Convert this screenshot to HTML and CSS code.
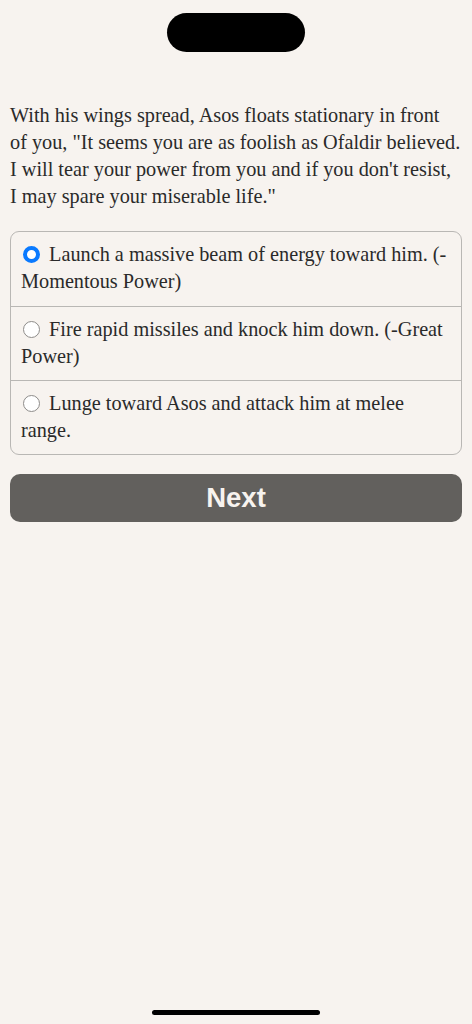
FILE: index.html
```html
<!DOCTYPE html>
<html lang="en">
<head>
  <meta charset="UTF-8" />
  <meta name="viewport" content="width=device-width, initial-scale=1.0"/>
  <title>Asos</title>
  <link rel="stylesheet" href="styles.css">
</head>
<body>
  <div class="screen">
    <div class="island"></div>

    <p class="story">With his wings spread, Asos floats stationary in front<br>
      of you, "It seems you are as foolish as Ofaldir believed.<br>
      I will tear your power from you and if you don't resist,<br>
      I may spare your miserable life."</p>

    <form class="choices">
      <label class="choice">
        <input type="radio" name="choice" checked>
        Launch a massive beam of energy toward him. (-Momentous Power)
      </label>
      <label class="choice">
        <input type="radio" name="choice">
        Fire rapid missiles and knock him down. (-Great Power)
      </label>
      <label class="choice">
        <input type="radio" name="choice">
        Lunge toward Asos and attack him at melee range.
      </label>
    </form>

    <button type="button" class="next-button">Next</button>

    <div class="home-bar"></div>
  </div>
</body>
</html>
```

FILE: styles.css
```css
* {
  margin: 0;
  padding: 0;
  box-sizing: border-box;
}

body {
  background-color: #f7f3ef;
  font-family: 'Liberation Serif', 'Times New Roman', serif;
  color: #2a2a2a;
}

.screen {
  min-height: 1024px;
  display: flex;
  flex-direction: column;
  padding: 13px 10px 9px;
}

.island {
  align-self: center;
  width: 138px;
  height: 39px;
  background-color: #000;
  border-radius: 20px;
}

.story {
  margin-top: 50px;
  font-size: 20.25px;
  line-height: 27px;
}

.choices {
  margin-top: 21px;
  border: 1px solid #b9b7b4;
  border-radius: 9px;
}

.choice {
  display: block;
  height: 74px;
  padding: 9px 10px 0;
  font-size: 20.25px;
  line-height: 27px;
}

.choice + .choice {
  border-top: 1px solid #b9b7b4;
}

.choice input {
  appearance: none;
  width: 17px;
  height: 17px;
  margin: 0 4px 0 2px;
  border: 1.5px solid #8e8c8a;
  border-radius: 50%;
  background-color: #fff;
  vertical-align: -2px;
}

.choice input:checked {
  border: 4.5px solid #0a7aff;
}

.next-button {
  margin-top: 19px;
  height: 48px;
  border: none;
  border-radius: 10px;
  background-color: #62605d;
  color: #f7f3ef;
  font-family: 'Liberation Sans', Arial, sans-serif;
  font-size: 27.5px;
  font-weight: bold;
}

.home-bar {
  margin-top: auto;
  align-self: center;
  width: 168px;
  height: 5px;
  border-radius: 3px;
  background-color: #000;
}
```
